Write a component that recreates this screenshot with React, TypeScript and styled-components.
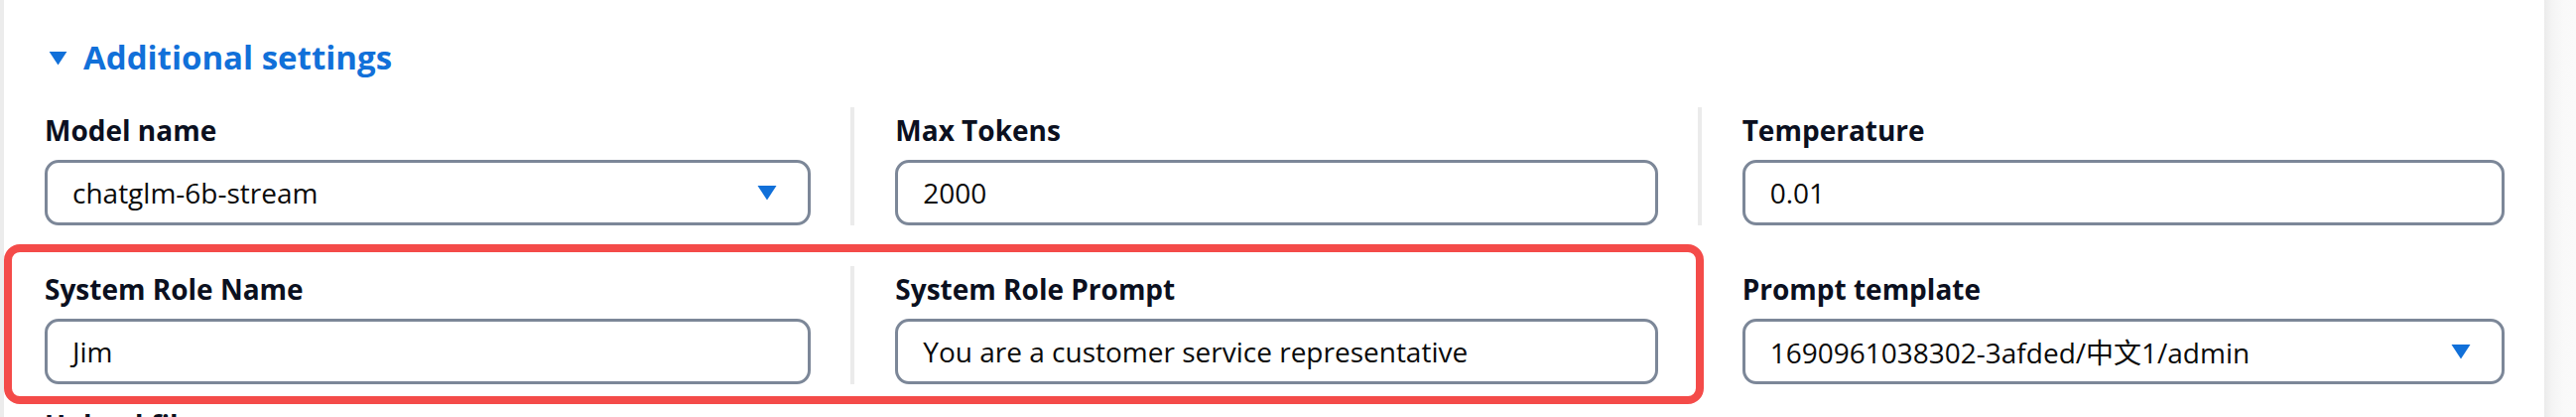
import React from "react";
import styled, { createGlobalStyle } from "styled-components";

const GlobalStyle = createGlobalStyle`
  html, body {
    margin: 0;
    padding: 0;
    height: 420px;
    overflow: hidden;
    background: #ffffff;
    font-family: "Open Sans", "Noto Sans", "Noto Sans CJK SC", sans-serif;
  }
  * { box-sizing: border-box; }
`;

const Page = styled.div`
  display: flex;
  height: 420px;
  width: 2596px;
  overflow: hidden;
`;

const LeftGutter = styled.div`
  width: 4px;
  flex: none;
  background: #ececec;
`;

const RightGutter = styled.div`
  width: 32px;
  flex: none;
  background: linear-gradient(to right, #ebebeb 0%, #f4f4f4 25%, #f9f9f9 60%, #fafafa 100%);
`;

const Main = styled.div`
  position: relative;
  flex: 1;
  min-width: 0;
  padding-top: 35px;
`;

const Summary = styled.div`
  display: flex;
  align-items: center;
  gap: 15px;
  padding-left: 44px;
  height: 45px;
  color: #1170d9;
  font-size: 33px;
  font-weight: 700;
  line-height: 45px;
`;

const Marker = styled.svg`
  width: 21px;
  height: 15px;
  flex: none;
  margin-top: 2px;
`;

const Grid = styled.div`
  display: grid;
  grid-template-columns: repeat(3, 1fr);
  row-gap: 41px;
  margin-top: 28px;
`;

const Cell = styled.div<{ $divider?: boolean }>`
  display: flex;
  flex-direction: column;
  gap: 10px;
  padding: 3px 40px 0 41px;
  border-left: ${(p) => (p.$divider ? "4px solid #ebebeb" : "none")};
  min-width: 0;
`;

const Label = styled.div`
  font-size: 28px;
  font-weight: 700;
  line-height: 40px;
  color: #0b1020;
  white-space: nowrap;
`;

const Field = styled.div`
  position: relative;
  display: flex;
  align-items: center;
  height: 66px;
  border: 3px solid #7c8798;
  border-radius: 14px;
  padding: 0 25px;
  font-size: 28px;
  color: #0a0a0a;
  background: #ffffff;
  white-space: nowrap;
`;

const Value = styled.span`
  flex: 1;
  min-width: 0;
  font-family: "Open Sans", "Noto Sans CJK SC", sans-serif;
`;

const Caret = styled.svg`
  width: 20px;
  height: 16px;
  flex: none;
  margin-right: 6px;
`;

const Highlight = styled.div`
  position: absolute;
  left: 0;
  top: 246px;
  width: 1713px;
  height: 161px;
  border: 8px solid #f44b49;
  border-radius: 16px;
  pointer-events: none;
`;

const NextLabel = styled(Label)`
  margin-top: 21px;
  padding-left: 41px;
`;

const Triangle = ({ as: Comp }: { as: typeof Marker | typeof Caret }) => (
  <Comp viewBox="0 0 20 16">
    <path d="M0.5 1 H19.5 L10 15.5 Z" fill="#1170d9" />
  </Comp>
);

type FieldDef = { label: string; value: string; select?: boolean };

const rows: FieldDef[] = [
  { label: "Model name", value: "chatglm-6b-stream", select: true },
  { label: "Max Tokens", value: "2000" },
  { label: "Temperature", value: "0.01" },
  { label: "System Role Name", value: "Jim" },
  { label: "System Role Prompt", value: "You are a customer service representative" },
  { label: "Prompt template", value: "1690961038302-3afded/中文1/admin", select: true },
];

export default function App() {
  return (
    <>
      <GlobalStyle />
      <Page>
        <LeftGutter />
        <Main>
          <Summary>
            <Triangle as={Marker} />
            <span>Additional settings</span>
          </Summary>
          <Grid>
            {rows.map((f, i) => (
              <Cell key={f.label} $divider={i % 3 !== 0}>
                <Label>{f.label}</Label>
                <Field>
                  <Value>{f.value}</Value>
                  {f.select && <Triangle as={Caret} />}
                </Field>
              </Cell>
            ))}
          </Grid>
          <NextLabel>Upload files</NextLabel>
          <Highlight />
        </Main>
        <RightGutter />
      </Page>
    </>
  );
}
